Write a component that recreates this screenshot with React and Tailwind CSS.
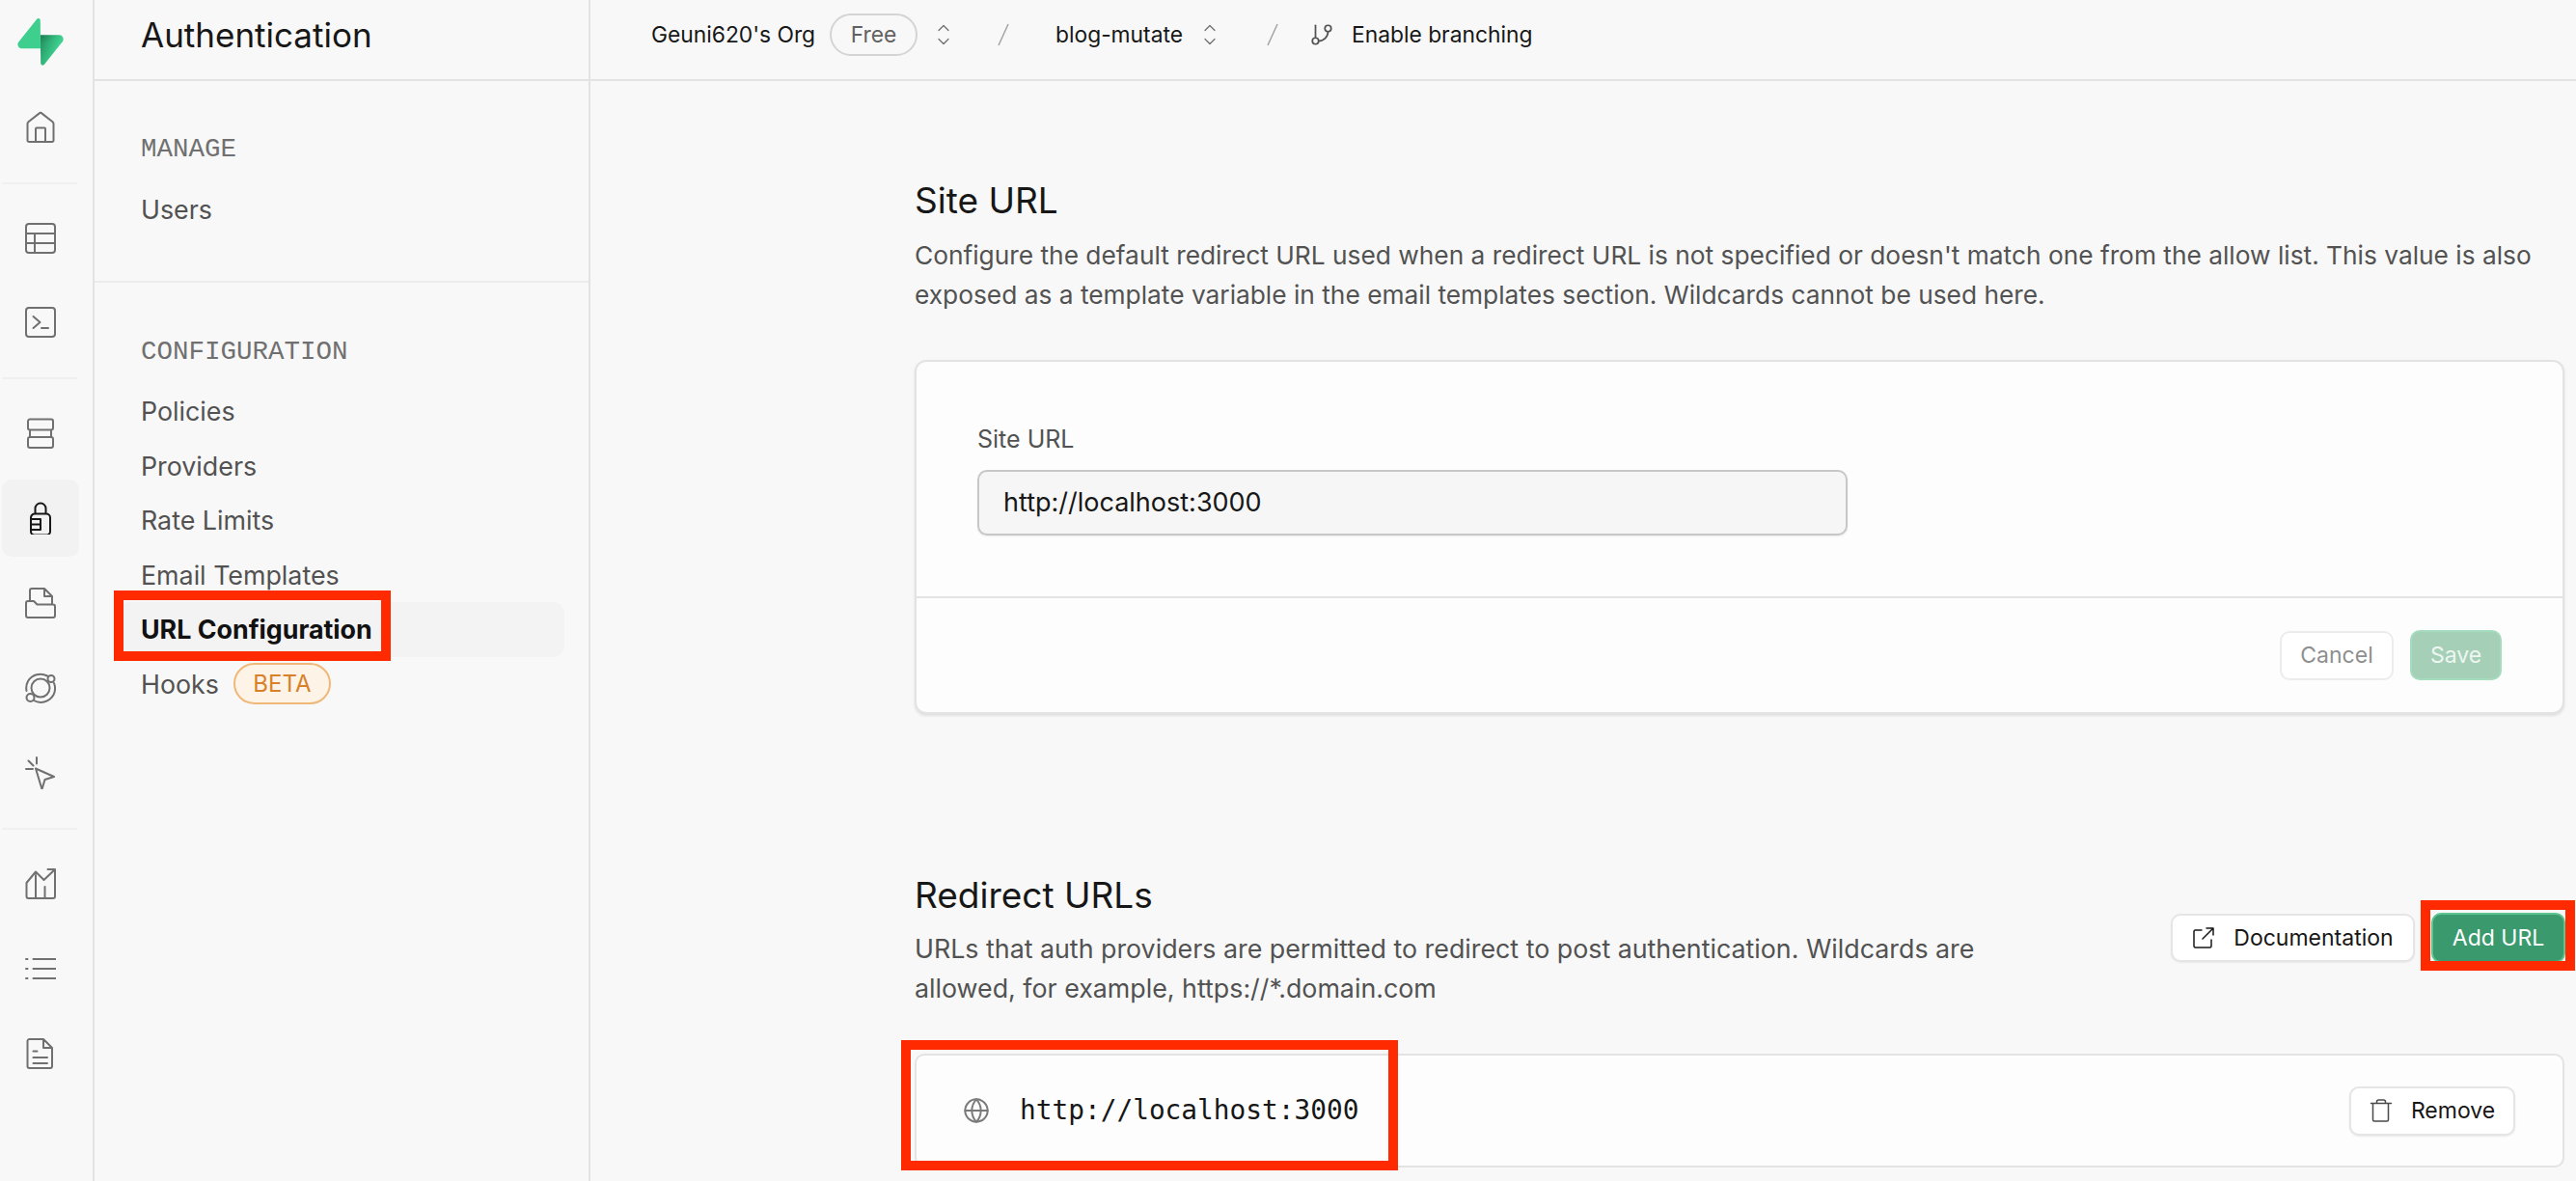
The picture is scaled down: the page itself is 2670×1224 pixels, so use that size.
import React from 'react';
import { ChevronUp, ChevronDown, GitBranch, Globe } from 'lucide-react';

const sans = 'font-["Inter",sans-serif]';

const Logo = () => (
  <svg viewBox="0 0 109 113" className="w-[48px] h-[49px]" fill="none">
    <path d="M63.7076 110.284C60.8481 113.885 55.0502 111.912 54.9813 107.314L53.9738 40.0627L99.1935 40.0627C107.384 40.0627 111.952 49.5228 106.859 55.9374L63.7076 110.284Z" fill="url(#logo-a)" />
    <path d="M63.7076 110.284C60.8481 113.885 55.0502 111.912 54.9813 107.314L53.9738 40.0627L99.1935 40.0627C107.384 40.0627 111.952 49.5228 106.859 55.9374L63.7076 110.284Z" fill="url(#logo-b)" fillOpacity="0.2" />
    <path d="M45.317 2.07103C48.1765 -1.53037 53.9745 0.442937 54.0434 5.041L54.4849 72.2922H9.83113C1.64038 72.2922 -2.92775 62.8321 2.1655 56.4175L45.317 2.07103Z" fill="#3ECF8E" />
    <defs>
      <linearGradient id="logo-a" x1="53.9738" y1="54.974" x2="94.1635" y2="71.8295" gradientUnits="userSpaceOnUse">
        <stop stopColor="#249361" />
        <stop offset="1" stopColor="#3ECF8E" />
      </linearGradient>
      <linearGradient id="logo-b" x1="36.1558" y1="30.578" x2="54.4844" y2="65.0806" gradientUnits="userSpaceOnUse">
        <stop />
        <stop offset="1" stopOpacity="0" />
      </linearGradient>
    </defs>
  </svg>
);

const railIcons = {
  home: <path d="M4 31h24a1.5 1.5 0 0 0 1.5-1.5V12.5a3 3 0 0 0-1-2.2L17.5 1.6a2.2 2.2 0 0 0-3 0L3.5 10.3a3 3 0 0 0-1 2.2v17A1.5 1.5 0 0 0 4 31ZM11 31V17.5a1 1 0 0 1 1-1h8a1 1 0 0 1 1 1V31" />,
  table: <path d="M4 1h24a3 3 0 0 1 3 3v24a3 3 0 0 1-3 3H4a3 3 0 0 1-3-3V4a3 3 0 0 1 3-3ZM1 11h30M1 21h30M10 11v20" />,
  terminal: <path d="M4 1h24a3 3 0 0 1 3 3v24a3 3 0 0 1-3 3H4a3 3 0 0 1-3-3V4a3 3 0 0 1 3-3ZM8.5 10l7 6-7 6M17 22h7" />,
  storage: <path d="M5 1.5h22a2 2 0 0 1 2 2v7a2 2 0 0 1-2 2H5a2 2 0 0 1-2-2v-7a2 2 0 0 1 2-2ZM5 20h22a2 2 0 0 1 2 2v7a2 2 0 0 1-2 2H5a2 2 0 0 1-2-2v-7a2 2 0 0 1 2-2ZM5 12.5V20M27 12.5V20" />,
  auth: <path d="M10 11.5h12a4 4 0 0 1 4 4V30a3.5 3.5 0 0 1-3.5 3.5h-13A3.5 3.5 0 0 1 6 30V15.5a4 4 0 0 1 4-4ZM10.5 11.5V6a5.5 5.5 0 0 1 11 0v5.5M6 17h10v11H6M6 22.5h10" />,
  folder: <path d="M3 14h6l3.5 3.5H29a2 2 0 0 1 2 2V29a2 2 0 0 1-2 2H3a2 2 0 0 1-2-2V16a2 2 0 0 1 2-2ZM5 14V3a2 2 0 0 1 2-2h13l8 8v8.5M20 1v8h8" />,
  realtime: <>
    <circle cx="16" cy="16" r="9.5" />
    <path d="M23 3.5A15 15 0 0 0 3 9a15 15 0 0 0-1.5 10M9 29a15 15 0 0 0 20.5-6A15 15 0 0 0 30 11" />
    <circle cx="27" cy="6.5" r="3.5" />
    <circle cx="5.5" cy="26" r="4" />
  </>,
  cursor: <path d="M11 11.5 30 20l-9.5 3-3 10ZM1 12h7M3.5 3.5l5 5M12 0v6.5" />,
  reports: <path d="M1.5 15 11 3.5l8.5 8.5L30.5 1.5M23.5 1h7.5v7.5M1.5 15v14a2 2 0 0 0 2 2h25.5a2 2 0 0 0 2-2V2M11 7v24M20.5 19v12" />,
  logs: <path d="M8.5 6H32M8.5 16H32M8.5 26H32M1 6h1.5M1 16h1.5M1 26h1.5" />,
  docs: <path d="M4.5 1H19l9 9v19a2 2 0 0 1-2 2H4.5a2 2 0 0 1-2-2V3a2 2 0 0 1 2-2ZM19 1v9h9M8.5 13.500h4M8.5 20h14.500M8.5 26h14.500" />,
};

const RailIcon = ({ name, active }) => (
  <div className={`w-[80px] h-[80px] rounded-[10px] flex items-center justify-center ${active ? 'bg-[#f2f2f2]' : ''}`}>
    <svg
      viewBox="0 -1 32 34"
      className="w-[32px] h-[34px]"
      fill="none"
      stroke={active ? '#171717' : '#707070'}
      strokeWidth="2"
      strokeLinecap="round"
      strokeLinejoin="round"
    >
      {railIcons[name]}
    </svg>
  </div>
);

const RailDivider = () => <div className="w-[78px] h-[2px] bg-[#f0f0f0] my-[16.5px]" />;

const Rail = () => (
  <aside className="w-[98px] shrink-0 h-full border-r-2 border-[#e3e3e3] pl-[2px] flex flex-col">
    <div className="pt-[19px] pl-[16px] pb-[24px]">
      <Logo />
    </div>
    <RailIcon name="home" />
    <RailDivider />
    <div className="flex flex-col gap-[7px]">
      <RailIcon name="table" />
      <RailIcon name="terminal" />
    </div>
    <RailDivider />
    <div className="flex flex-col gap-[8px]">
      <RailIcon name="storage" />
      <RailIcon name="auth" active />
      <RailIcon name="folder" />
      <RailIcon name="realtime" />
      <RailIcon name="cursor" />
    </div>
    <RailDivider />
    <div className="flex flex-col gap-[8px]">
      <RailIcon name="reports" />
      <RailIcon name="logs" />
      <RailIcon name="docs" />
    </div>
  </aside>
);

const MenuLabel = ({ children }) => (
  <div className='pl-[48px] h-[36px] flex items-center font-["Liberation_Mono",monospace] text-[27.5px] text-[#707070]'>
    {children}
  </div>
);

const MenuItem = ({ children, active }) => (
  <div
    className={`ml-[24px] mr-[25px] pl-[24px] h-[56.5px] flex items-center rounded-[12px] text-[26.8px] ${
      active ? 'bg-[#f3f3f3] text-[#111111] font-bold' : 'text-[#525252]'
    }`}
  >
    {children}
  </div>
);

const Menu = () => (
  <aside className="w-[514px] shrink-0 h-full border-r-2 border-[#e3e3e3] flex flex-col">
    <div className="h-[84px] shrink-0 border-b-2 border-[#e3e3e3] pl-[48px] pb-[10px] flex items-center text-[35px] text-[#171717]">
      Authentication
    </div>
    <div className="h-[209px] shrink-0 border-b-2 border-[#ececec] pt-[53px]">
      <MenuLabel>MANAGE</MenuLabel>
      <div className="mt-[16px]">
        <MenuItem>Users</MenuItem>
      </div>
    </div>
    <div className="pt-[54px]">
      <MenuLabel>CONFIGURATION</MenuLabel>
      <div className="mt-[15px] flex flex-col">
        <MenuItem>Policies</MenuItem>
        <MenuItem>Providers</MenuItem>
        <MenuItem>Rate Limits</MenuItem>
        <MenuItem>Email Templates</MenuItem>
        <MenuItem active>URL Configuration</MenuItem>
        <MenuItem>
          Hooks
          <span className="ml-[15px] h-[43px] w-[101px] rounded-full border-2 border-[#efb878] bg-[#fdf3e7] text-[#d98029] text-[24px] flex items-center justify-center">
            BETA
          </span>
        </MenuItem>
      </div>
    </div>
  </aside>
);

const UpDown = () => (
  <span className="flex flex-col items-center text-[#707070] w-[20px]">
    <ChevronUp size={20} strokeWidth={1.5} className="-mb-[3px]" />
    <ChevronDown size={20} strokeWidth={1.5} className="-mt-[3px]" />
  </span>
);

const Slash = () => (
  <svg viewBox="0 0 14 24" className="w-[14px] h-[24px]" fill="none" stroke="#a3a3a3" strokeWidth="1.5">
    <path d="M12 1 2 23" />
  </svg>
);

const TopBar = () => (
  <div className="h-[84px] shrink-0 border-b-2 border-[#e3e3e3] pl-[63px] flex items-center text-[22.8px] text-[#171717] pb-[10px]">
    <span className="w-[185px]">Geuni620's Org</span>
    <span className="h-[44px] w-[91px] rounded-full border-2 border-[#d4d4d4] text-[#616161] flex items-center justify-center">
      Free
    </span>
    <span className="ml-[17px]">
      <UpDown />
    </span>
    <span className="ml-[45px]">
      <Slash />
    </span>
    <span className="ml-[47px] w-[150px]">blog-mutate</span>
    <UpDown />
    <span className="ml-[48px]">
      <Slash />
    </span>
    <GitBranch size={26} strokeWidth={1.6} className="ml-[31px] text-[#525252]" />
    <span className="ml-[18px]">Enable branching</span>
  </div>
);

const Button = ({ className, children }) => (
  <div className={`flex items-center justify-center rounded-[10px] border-2 text-[23px] ${className}`}>{children}</div>
);

const SiteUrl = () => (
  <section>
    <h2 className="text-[37px] leading-[48px] text-[#171717]">Site URL</h2>
    <p className="mt-[12px] text-[26.3px] leading-[41px] text-[#525252] w-[1700px]">
      Configure the default redirect URL used when a redirect URL is not specified or doesn't match one from the allow list. This value is also exposed as a template variable in the email templates section. Wildcards cannot be used here.
    </p>
    <div className="mt-[47px] w-[1710px] h-[367px] bg-[#fdfdfd] rounded-[12px] border-2 border-[#e3e3e3] shadow-[0_2px_3px_rgba(0,0,0,0.1)] flex flex-col">
      <div className="h-[245px] shrink-0 border-b-2 border-[#e3e3e3] pl-[63px] pt-[62px]">
        <div className="text-[25px] leading-[36px] text-[#525252]">Site URL</div>
        <div className="mt-[14px] w-[902px] h-[68px] rounded-[10px] border-2 border-[#c7c7c7] bg-[#f6f6f6] shadow-[0_1px_2px_rgba(0,0,0,0.08)] pl-[25px] flex items-center text-[27px] text-[#171717]">
          http://localhost:3000
        </div>
      </div>
      <div className="flex-1 flex items-center justify-end gap-[17px] pr-[63px]">
        <Button className="w-[118px] h-[51px] bg-white border-[#ececec] text-[#8f8f8f]">Cancel</Button>
        <Button className="w-[95px] h-[52px] bg-[#a6cfb8] border-[#a5dcbd] text-[#edf6f0]">Save</Button>
      </div>
    </div>
  </section>
);

const RedirectUrls = () => (
  <section className="mt-[164px]">
    <div className="flex items-end justify-between">
      <div className="w-[1160px]">
        <h2 className="text-[37px] leading-[48px] text-[#171717]">Redirect URLs</h2>
        <p className="mt-[11px] text-[26.8px] leading-[41px] text-[#525252]">
          URLs that auth providers are permitted to redirect to post authentication. Wildcards are allowed, for example, https://*.domain.com
        </p>
      </div>
      <div className="flex items-center gap-[17px] mb-[47px]">
        <Button className="w-[253px] h-[50px] bg-white border-[#e5e5e5] text-[#171717] gap-[19px] shadow-[0_1px_2px_rgba(0,0,0,0.06)]">
          <svg viewBox="0 0 24 24" className="w-[24px] h-[24px]" fill="none" stroke="#171717" strokeWidth="1.5" strokeLinecap="round" strokeLinejoin="round">
            <path d="M10 4H3.5A1.5 1.5 0 0 0 2 5.5v15A1.5 1.5 0 0 0 3.5 22h15a1.5 1.5 0 0 0 1.5-1.5V14M11 13 22 2M15 2h7v7" />
          </svg>
          Documentation
        </Button>
        <Button className="w-[139px] h-[52px] bg-[#3a9a6e] border-[#5cc48e] text-white">Add URL</Button>
      </div>
    </div>
    <div className="mt-[47px] w-[1710px] h-[118px] bg-[#fdfdfd] rounded-[10px] border-2 border-[#e3e3e3] flex items-center pl-[48px] pr-[49px]">
      <Globe size={28} strokeWidth={1.7} className="text-[#7a7a7a]" />
      <span className='ml-[31px] font-["DejaVu_Sans_Mono",monospace] text-[27.8px] text-[#171717]'>http://localhost:3000</span>
      <Button className="ml-auto w-[172px] h-[51px] bg-white border-[#e5e5e5] text-[#171717] gap-[19px] shadow-[0_1px_2px_rgba(0,0,0,0.08)]">
        <svg viewBox="0 0 24 24" className="w-[24px] h-[26px]" fill="none" stroke="#4a4a4a" strokeWidth="1.5" strokeLinecap="round" strokeLinejoin="round">
          <path d="M1.5 4.5h21M3.5 4.5v17A1.5 1.5 0 0 0 5 23h13a1.5 1.5 0 0 0 1.5-1.5v-17M7.5 4.5V3a2 2 0 0 1 2-2h5a2 2 0 0 1 2 2v1.5" />
        </svg>
        Remove
      </Button>
    </div>
  </section>
);

export default function App() {
  return (
    <div className={`relative w-[2670px] h-[1224px] overflow-hidden bg-[#f8f8f8] flex ${sans}`}>
      <Rail />
      <Menu />
      <main className="flex-1 min-w-0 flex flex-col">
        <TopBar />
        <div className="pl-[336px] pr-[11px] pt-[100px]">
          <SiteUrl />
          <RedirectUrls />
        </div>
      </main>

      {/* red annotation boxes drawn over the screenshot */}
      <div className="absolute left-[118px] top-[612px] w-[287px] h-[73px] border-[10px] border-[#ff2a00]" />
      <div className="absolute left-[2509px] top-[933px] w-[160px] h-[73px] border-[10px] border-[#ff2a00]" />
      <div className="absolute left-[934px] top-[1078px] w-[515px] h-[135px] border-[10px] border-[#ff2a00]" />
    </div>
  );
}
